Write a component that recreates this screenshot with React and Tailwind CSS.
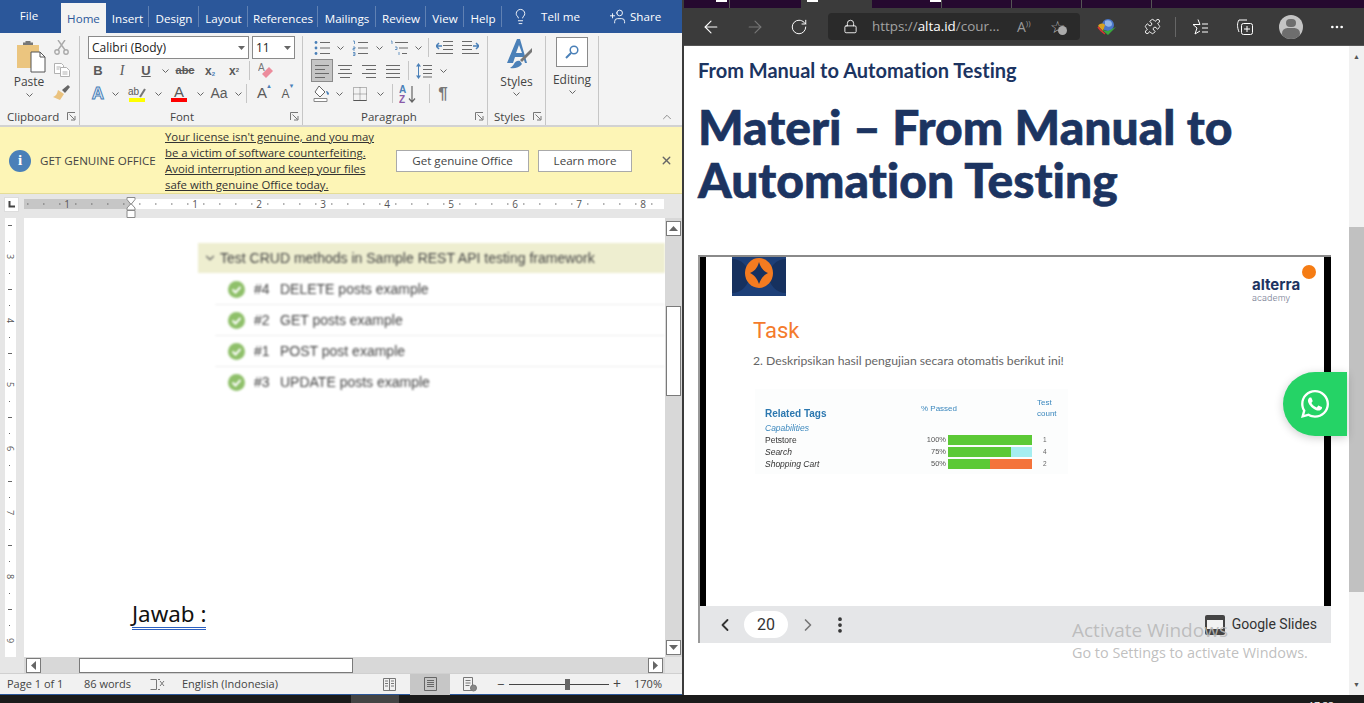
import React from "react";
import { ArrowLeft, ArrowRight, RotateCw, Lock, Puzzle, ChevronLeft, ChevronRight, EllipsisVertical, Ellipsis, Lightbulb, UserPlus, X, ChevronDown, ChevronUp } from "lucide-react";
import { FaWhatsapp } from "react-icons/fa";

const tabs = [
  ["Insert", "w-[43px]"],
  ["Design", "w-[50px]"],
  ["Layout", "w-[49px]"],
  ["References", "w-[70px]"],
  ["Mailings", "w-[58px]"],
  ["Review", "w-[50px]"],
  ["View", "w-[38px]"],
  ["Help", "w-[38px]"],
];

const G = "#6a6a6a";
const B = "#4a80b8";

function Chev({ w = "w-[12px]" }) {
  return (
    <span className={`${w} flex justify-center`}>
      <svg width="7" height="4" viewBox="0 0 7 4"><path d="M.5.5 3.5 3.5 6.5.5" fill="none" stroke="#666" /></svg>
    </span>
  );
}

function Launcher() {
  return (
    <svg width="9" height="9" viewBox="0 0 9 9"><path d="M.5 8V.5H8M2.5 2.5 7.5 7.5M4 8h4V4" fill="none" stroke="#777" /></svg>
  );
}

function Cell({ w, children }) {
  return <span className={`${w} h-full flex items-center justify-center shrink-0`}>{children}</span>;
}

function Div() {
  return <span className="block w-px h-[19px] bg-[#c6c6c6] shrink-0" />;
}

function Lines({ w = 16, ys = [2, 6, 10, 14], xs = [], color = G }) {
  return (
    <svg width={w} height="16" viewBox={`0 0 ${w} 16`}>
      {ys.map((y, i) => (
        <path key={i} d={`M${(xs[i] && xs[i][0]) || 0} ${y + 0.5}H${(xs[i] && xs[i][1]) || w}`} stroke={color} />
      ))}
    </svg>
  );
}

function Bullets() {
  return (
    <svg width="16" height="16" viewBox="0 0 16 16">
      <circle cx="2" cy="2.5" r="1.4" fill={B} /><circle cx="2" cy="8" r="1.4" fill={B} /><circle cx="2" cy="13.5" r="1.4" fill={B} />
      <path d="M6 2.5h10M6 8h10M6 13.5h10" stroke={G} />
    </svg>
  );
}

function Numbers() {
  return (
    <svg width="16" height="16" viewBox="0 0 16 16">
      <path d="M1 1h1.5v3M1 7h2v1.5H1V10h2M1 12.5h2v3H1M1 14h2" fill="none" stroke={B} strokeWidth=".8" />
      <path d="M6 2.5h10M6 8h10M6 13.5h10" stroke={G} />
    </svg>
  );
}

function Multi() {
  return (
    <svg width="18" height="16" viewBox="0 0 18 16">
      <path d="M1 1h1v3M5 7h2v2.500H5M9 12v3" fill="none" stroke={B} strokeWidth=".8" />
      <path d="M5 2.500h13M9 8h9M12 13.500h5" stroke={G} />
    </svg>
  );
}

function Indent({ flip }) {
  return (
    <svg width="17" height="13" viewBox="0 0 17 13" className={flip ? "-scale-x-100" : ""}>
      <path d="M7 .5h10M7 4.500h10M7 8.500h10M0 12.500h17" stroke={G} />
      <path d="M0 5h6M3 2 0 5l3 3" fill="none" stroke={B} strokeWidth="1.500" />
    </svg>
  );
}

function Paste() {
  return (
    <svg width="30" height="32" viewBox="0 0 30 32">
      <path d="M1 4h22v23H1z" fill="#ebc57f" />
      <path d="M7 4h10V1.500H14.500V0h-5v1.500H7z" fill="#777" />
      <path d="M15 11h9l5 5v15H15z" fill="#fff" stroke="#555" />
      <path d="M24 11v5h5" fill="none" stroke="#555" />
    </svg>
  );
}

function Scissors() {
  return (
    <svg width="15" height="15" viewBox="0 0 15 15" fill="none" stroke="#a9a9a9" strokeWidth="1.400">
      <circle cx="3" cy="12" r="2.200" /><circle cx="12" cy="12" r="2.200" />
      <path d="M4 10 11 0M11 10 4 0" />
    </svg>
  );
}

function Copy() {
  return (
    <svg width="16" height="14" viewBox="0 0 16 14" fill="#fff" stroke="#b1b1b1">
      <path d="M.5.5h7l2 2v8H.5z" /><path d="M6.500 4.500h6l3 3v6h-9z" />
      <path d="M2.500 4h4M2.500 6h3M8.500 9h5M8.500 11h5" />
    </svg>
  );
}

function Painter() {
  return (
    <svg width="17" height="16" viewBox="0 0 17 16">
      <path d="M9 5 15 0 17 2 12 8z" fill="#666" />
      <path d="M5 5 11 9 7 15 0 12C3 11 4 9 5 5z" fill="#eac27e" />
    </svg>
  );
}

function Eraser() {
  return (
    <svg width="16" height="17" viewBox="0 0 16 17">
      <path d="M8 16 15 9 11 5 4 12z" fill="#ec8c9c" />
      <text x="0" y="9" fontSize="10" fill="#777" fontFamily="Liberation Sans">A</text>
    </svg>
  );
}

function Shading() {
  return (
    <svg width="18" height="18" viewBox="0 0 18 18" fill="none">
      <path d="M6 1 12 7 7 12 2 7z" fill="#fff" stroke="#666" />
      <path d="M13 6c2 0 3 2 3 3s-2 1-2 0z" fill={B} />
      <path d="M1 13.500h13v3H1z" stroke="#888" fill="#fff" />
    </svg>
  );
}

function BordersIcon() {
  return (
    <svg width="14" height="14" viewBox="0 0 14 14">
      <path d="M.5.500h13v13H.5zM7 .5v13M.5 7h13" fill="none" stroke="#777" strokeDasharray="1 1" />
      <path d="M.5 13.500h13" stroke="#555" />
    </svg>
  );
}

function Sort() {
  return (
    <svg width="18" height="20" viewBox="0 0 18 20">
      <text x="0" y="9" fontSize="10" fontWeight="700" fill={B} fontFamily="Liberation Sans">A</text>
      <text x="0" y="19" fontSize="10" fontWeight="700" fill="#8a5aa8" fontFamily="Liberation Sans">Z</text>
      <path d="M13 2v16M10 14.500l3 3.500 3-3.500" fill="none" stroke="#666" strokeWidth="1.200" />
    </svg>
  );
}

function LineSpacing() {
  return (
    <svg width="16" height="18" viewBox="0 0 16 18">
      <path d="M2.500 2v14" stroke={B} />
      <path d="M0 4.500 2.500 1 5 4.500zM0 13.500 2.500 17 5 13.500z" fill={B} />
      <path d="M7 3.500h9M7 7.500h9M7 11.500h9M7 15h9" stroke={G} />
    </svg>
  );
}

function StylesIcon() {
  return (
    <svg width="30" height="32" viewBox="0 0 30 32">
      <path d="M14 1 4 25h6l2-6h8l2 6h2L17 1zM13 15l3-8 3 8z" fill={B} />
      <path d="M29 10 17 22l2 2L29 14z" fill="#777" />
      <path d="M17 23c-3-1-5 1-6 3s-3 3-4 4c4 1 9 0 12-4z" fill={B} />
    </svg>
  );
}

function Ruler() {
  const ticks = [];
  for (let x = 3; x < 640; x += 16) {
    const major = (x - 107) % 64 === 0;
    if ((x - 107) % 32 === 0 && !major) ticks.push(<path key={x} d={`M${x + 0.5} 4v6`} stroke="#666" />);
    else if (!major) ticks.push(<path key={x} d={`M${x} 7h1.500`} stroke="#666" />);
  }
  const nums = [[43, 1], [171, 1], [235, 2], [299, 3], [363, 4], [427, 5], [491, 6], [555, 7], [619, 8]];
  return (
    <svg width="640" height="21" viewBox="0 0 640 21" className="block">
      <path d="M0 2h107v10H0z" fill="#c6c6c6" />
      <path d="M107 2h533v10H107z" fill="#fff" />
      {ticks}
      {nums.map(([x, n], i) => (
        <text key={i} x={x} y="11" textAnchor="middle" fontSize="10" fill="#555" fontFamily="Open Sans">{n}</text>
      ))}
      <path d="M103 .5h8v2l-4 5-4-5zM103 13v-2l4-4.500 4 4.500v2zM103 13.500h8v7h-8z" fill="#fff" stroke="#8a8a8a" />
    </svg>
  );
}

function VRuler() {
  const ticks = [];
  for (let y = 7; y < 439; y += 16) {
    const major = (y - 39) % 64 === 0;
    if ((y - 7) % 32 === 0 && !major) ticks.push(<path key={y} d={`M3 ${y + 0.5}h4`} stroke="#666" />);
    else if (!major) ticks.push(<path key={y} d={`M4.500 ${y}v1`} stroke="#666" />);
  }
  const nums = [[39, 3], [103, 4], [167, 5], [231, 6], [295, 7], [359, 8], [423, 9]];
  return (
    <svg width="11" height="439" viewBox="0 0 11 439" className="block">
      {ticks}
      {nums.map(([y, n], i) => (
        <text key={i} x="0" y="0" transform={`translate(2 ${y - 3}) rotate(90)`} fontSize="9" fill="#555" fontFamily="Open Sans">{n}</text>
      ))}
    </svg>
  );
}

function ScrollBtn({ d, className = "" }) {
  return (
    <span className={`w-[15px] h-[15px] bg-white border border-[#7a7a7a] flex items-center justify-center shrink-0 ${className}`}>
      <svg width="9" height="9" viewBox="0 0 9 9"><path d={d} fill="#666" /></svg>
    </span>
  );
}

function CheckDot() {
  return (
    <svg width="17" height="17" viewBox="0 0 17 17">
      <circle cx="8.500" cy="8.500" r="8.500" fill="#8fc06a" />
      <path d="M4.500 8.500 7.500 11.500 12.500 6" fill="none" stroke="#fff" strokeWidth="2" />
    </svg>
  );
}

function Ribbon() {
  return (
    <div className="h-[92px] bg-[#f3f3f3] flex text-[#444] shrink-0">
      {/* clipboard */}
      <div className="w-[80px] border-r border-[#c6c6c6] flex flex-col shrink-0 mt-[3px]">
        <div className="flex h-[69px]">
          <div className="w-[50px] flex flex-col items-center pt-[5px]">
            <span className="ml-[12px]"><Paste /></span>
            <span className="mt-[1px] text-[12px] leading-[16px] ml-[8px]">Paste</span>
            <span className="mt-[3px] ml-[8px]"><Chev /></span>
          </div>
          <div className="flex flex-col items-center gap-[8px] pt-[4px] ml-[3px]">
            <Scissors /><Copy /><Painter />
          </div>
        </div>
        <div className="mt-auto h-[17px] flex items-center justify-between pl-[7px] pr-[3px] text-[11.5px]">
          <span>Clipboard</span><Launcher />
        </div>
      </div>
      {/* font */}
      <div className="w-[223px] border-r border-[#c6c6c6] flex flex-col shrink-0 mt-[3px]">
        <div className="flex h-[23px] pl-[8px] gap-[3px]">
          <div className="w-[161px] bg-white border border-[#8a8a8a] flex items-center justify-between px-[3px] text-[12px] text-[#222]">
            <span>Calibri (Body)</span>
            <svg width="7" height="4" viewBox="0 0 7 4"><path d="M0 0h7L3.500 4z" fill="#666" /></svg>
          </div>
          <div className="w-[43px] bg-white border border-[#8a8a8a] flex items-center justify-between px-[3px] text-[12px] text-[#222]">
            <span>11</span>
            <svg width="7" height="4" viewBox="0 0 7 4"><path d="M0 0h7L3.500 4z" fill="#666" /></svg>
          </div>
        </div>
        <div className="flex h-[23px] pl-[6px] items-center font-['Liberation_Sans',sans-serif] text-[#5a5a5a]">
          <Cell w="w-[24px]"><b className="text-[13px]">B</b></Cell>
          <Cell w="w-[24px]"><i className="text-[14px] font-['Liberation_Serif',serif]">I</i></Cell>
          <Cell w="w-[24px]"><u className="text-[13px] font-bold">U</u></Cell>
          <Chev w="w-[14px]" />
          <Cell w="w-[26px]"><s className="text-[11px] font-bold">abc</s></Cell>
          <Cell w="w-[24px]"><b className="text-[12px]">x<sub className="text-[6px] text-[#4a80b8]">2</sub></b></Cell>
          <Cell w="w-[24px]"><b className="text-[12px]">x<sup className="text-[6px]">2</sup></b></Cell>
          <span className="ml-[3px]"><Div /></span>
          <Cell w="w-[31px]"><Eraser /></Cell>
        </div>
        <div className="flex h-[23px] pl-[6px] items-center font-['Liberation_Sans',sans-serif] text-[#5a5a5a]">
          <Cell w="w-[24px]"><span className="text-[17px] font-bold text-[#e8f0f8] [-webkit-text-stroke:1px_#4a80b8]">A</span></Cell>
          <Chev w="w-[10px]" />
          <Cell w="w-[34px]">
            <span className="flex flex-col items-center w-[16px]">
              <span className="flex items-end text-[10px] leading-[12px]">ab
                <svg width="7" height="10" viewBox="0 0 7 10"><path d="M1 9 6 1" stroke="#777" strokeWidth="2" /></svg>
              </span>
              <span className="w-[16px] h-[4px] bg-[#ffff00]" />
            </span>
          </Cell>
          <Chev w="w-[8px]" />
          <Cell w="w-[34px]">
            <span className="flex flex-col items-center w-[16px]">
              <span className="text-[15px] leading-[13px]">A</span>
              <span className="w-[16px] h-[4px] bg-[#ff0000]" />
            </span>
          </Cell>
          <Chev w="w-[8px]" />
          <Cell w="w-[30px]"><span className="text-[14px]">Aa</span></Cell>
          <Chev w="w-[8px]" />
          <span className="ml-[4px]"><Div /></span>
          <Cell w="w-[30px]"><span className="text-[15px] relative">A<span className="absolute -right-[5px] top-0 text-[6px] text-[#4a80b8]">▲</span></span></Cell>
          <Cell w="w-[17px]"><span className="text-[12px] relative">A<span className="absolute -right-[5px] -top-[3px] text-[6px] text-[#4a80b8]">▼</span></span></Cell>
        </div>
        <div className="mt-auto h-[17px] flex items-center pr-[3px] text-[11.5px]">
          <span className="ml-[90px]">Font</span><span className="ml-auto"><Launcher /></span>
        </div>
      </div>
      {/* paragraph */}
      <div className="w-[185px] border-r border-[#c6c6c6] flex flex-col shrink-0 mt-[3px]">
        <div className="flex h-[23px] items-center pl-[8px]">
          <Cell w="w-[22px]"><Bullets /></Cell><Chev w="w-[14px]" />
          <Cell w="w-[26px]"><Numbers /></Cell><Chev w="w-[12px]" />
          <Cell w="w-[28px]"><Multi /></Cell><Chev w="w-[10px]" />
          <span className="ml-[5px]"><Div /></span>
          <Cell w="w-[30px]"><Indent /></Cell>
          <Cell w="w-[22px]"><Indent flip /></Cell>
        </div>
        <div className="flex h-[23px] items-center pl-[8px]">
          <span className="w-[22px] h-[23px] bg-[#c6c6c6] border border-[#8a8a8a] flex items-center justify-center shrink-0">
            <Lines w={14} xs={[[0, 14], [0, 10], [0, 14], [0, 10]]} />
          </span>
          <Cell w="w-[24px]"><Lines w={14} xs={[[0, 14], [2, 12], [0, 14], [2, 12]]} /></Cell>
          <Cell w="w-[24px]"><Lines w={14} xs={[[0, 14], [4, 14], [0, 14], [4, 14]]} /></Cell>
          <Cell w="w-[24px]"><Lines w={14} /></Cell>
          <span className="ml-[3px]"><Div /></span>
          <Cell w="w-[30px]"><LineSpacing /></Cell><Chev w="w-[8px]" />
        </div>
        <div className="flex h-[23px] items-center pl-[8px]">
          <Cell w="w-[22px]"><Shading /></Cell><Chev w="w-[12px]" />
          <Cell w="w-[30px]"><BordersIcon /></Cell><Chev w="w-[10px]" />
          <span className="ml-[7px]"><Div /></span>
          <Cell w="w-[30px]"><Sort /></Cell>
          <span className="ml-[6px]"><Div /></span>
          <Cell w="w-[26px]"><span className="text-[17px] font-bold text-[#777] font-['Liberation_Sans',sans-serif]">¶</span></Cell>
        </div>
        <div className="mt-auto h-[17px] flex items-center pr-[3px] text-[11.5px]">
          <span className="ml-[58px]">Paragraph</span><span className="ml-auto"><Launcher /></span>
        </div>
      </div>
      {/* styles */}
      <div className="w-[58px] border-r border-[#c6c6c6] flex flex-col items-center shrink-0 mt-[3px]">
        <span className="mt-[2px] ml-[2px]"><StylesIcon /></span>
        <span className="mt-[4px] text-[12px] leading-[16px]">Styles</span>
        <span className="mt-[2px]"><Chev /></span>
        <div className="mt-auto h-[17px] w-full flex items-center justify-between pl-[6px] pr-[3px] text-[11.5px]">
          <span>Styles</span><Launcher />
        </div>
      </div>
      {/* editing */}
      <div className="w-[53px] border-r border-[#c6c6c6] flex flex-col items-center shrink-0 mt-[3px]">
        <span className="mt-[1px] w-[32px] h-[30px] bg-white border border-[#8a8a8a] flex items-center justify-center">
          <svg width="14" height="14" viewBox="0 0 14 14" fill="none" stroke="#4a80b8" strokeWidth="1.500"><circle cx="9" cy="5" r="3.800" /><path d="M6 8 1 13" strokeWidth="2" /></svg>
        </span>
        <span className="mt-[5px] text-[12px] leading-[16px]">Editing</span>
        <span className="mt-[2px]"><Chev /></span>
      </div>
      <div className="flex-1 flex items-end justify-end pr-[8px] pb-[1px]">
        <ChevronUp size={14} color="#666" strokeWidth={1.200} />
      </div>
    </div>
  );
}

function WordWindow() {
  return (
    <div className="w-[682px] h-full flex flex-col bg-[#e6e6e6] font-['Open_Sans',sans-serif] shrink-0 overflow-hidden">
      {/* tab row */}
      <div className="h-[33px] bg-[#2b579a] flex items-end text-white text-[11.6px] shrink-0">
        <span className="w-[61px] h-[33px] flex items-center justify-center pb-[2px] pr-[3px]">File</span>
        <span className="w-[45px] h-[30px] bg-[#f3f3f3] text-[#2b579a] flex items-center justify-center pt-[1px]">Home</span>
        {tabs.map(([t, w]) => (
          <span key={t} className={`${w} h-[33px] flex items-center justify-center shrink-0 relative pt-[4px]`}>
            {t}
            <span className="absolute right-0 top-[6px] h-[21px] w-px bg-white/25" />
          </span>
        ))}
        <span className="h-[33px] flex items-center ml-[10px]">
          <Lightbulb size={17} strokeWidth={1.300} />
          <span className="ml-[12px]">Tell me</span>
          <UserPlus size={17} strokeWidth={1.300} className="ml-[29px] -scale-x-100" />
          <span className="ml-[4px]">Share</span>
        </span>
      </div>
      <Ribbon />
      {/* license bar */}
      <div className="h-[69px] border-t-2 border-t-[#d2d2d2] border-b border-b-[#e5dd97] bg-[#fdf5b6] flex items-center text-[#444] shrink-0 pt-[1px]">
        <span className="ml-[9px] w-[22px] h-[22px] rounded-full bg-[#4a80b8] text-white flex items-center justify-center font-bold text-[15px] font-['Liberation_Serif',serif] shrink-0">i</span>
        <span className="ml-[9px] text-[11.6px] w-[125px] shrink-0 whitespace-nowrap">GET GENUINE OFFICE</span>
        <div className="w-[231px] text-[11.4px] leading-[16px] underline text-[#333] shrink-0">
          <div className="whitespace-nowrap">Your license isn't genuine, and you may</div>
          <div className="whitespace-nowrap">be a victim of software counterfeiting.</div>
          <div className="whitespace-nowrap">Avoid interruption and keep your files</div>
          <div className="whitespace-nowrap">safe with genuine Office today.</div>
        </div>
        <span className="w-[133px] h-[22px] bg-white border border-[#aaa] flex items-center justify-center text-[11.6px] shrink-0">Get genuine Office</span>
        <span className="ml-[9px] w-[94px] h-[22px] bg-white border border-[#aaa] flex items-center justify-center text-[11.6px] shrink-0">Learn more</span>
        <X size={13} strokeWidth={2.500} color="#666" className="ml-[28px]" />
      </div>
      {/* ruler */}
      <div className="h-[24px] flex shrink-0">
        <span className="w-[24px] flex items-start pl-[4px] pt-[3px]">
          <span className="w-[15px] h-[15px] bg-white border border-[#ddd] flex items-center justify-center">
            <svg width="7" height="7" viewBox="0 0 7 7"><path d="M1.500 0v5.500H7" fill="none" stroke="#444" strokeWidth="2" /></svg>
          </span>
        </span>
        <span className="pt-[3px]"><Ruler /></span>
      </div>
      {/* document */}
      <div className="flex-1 flex min-h-0">
        <div className="w-[24px] pl-[5px] shrink-0">
          <div className="w-[11px] h-full bg-white"><VRuler /></div>
        </div>
        <div className="flex-1 bg-white pl-[174px] pt-[25px] flex flex-col overflow-hidden">
          <div className="blur-[1px] font-['Liberation_Sans',sans-serif] text-[14px] text-[#444]">
            <div className="h-[30px] bg-[#eeeed0] flex items-center">
              <ChevronDown size={14} color="#666" className="ml-[5px]" />
              <span className="ml-[3px] whitespace-nowrap">Test CRUD methods in Sample REST API testing framework</span>
            </div>
            {[["#4", "DELETE posts example"], ["#2", "GET posts example"], ["#1", "POST post example"], ["#3", "UPDATE posts example"]].map(([n, t], i) => (
              <div key={n} className={`ml-[17px] flex items-center ${i === 0 ? "h-[32px] pt-[1px]" : "h-[31px]"} ${i < 3 ? "border-b border-[#eee]" : ""}`}>
                <span className="ml-[13px]"><CheckDot /></span>
                <span className="ml-[9px] w-[26px]">{n}</span>
                <span>{t}</span>
              </div>
            ))}
          </div>
          <div className="-ml-[66px] mt-[203px] w-fit text-[22.4px] leading-[26px] text-[#111] font-['Noto_Sans',sans-serif] border-b-[3px] border-double border-[#2b5fc0]">Jawab :</div>
        </div>
        <div className="w-[17px] bg-[#d8d8d8] flex flex-col items-center shrink-0 pt-[3px] pb-[2px]">
          <ScrollBtn d="M0 7 4.500 2 9 7z" />
          <span className="mt-[70px] w-[15px] h-[90px] bg-white border border-[#7a7a7a]" />
          <ScrollBtn d="M0 2 4.500 7 9 2z" className="mt-auto" />
        </div>
      </div>
      {/* bottom scrollbar */}
      <div className="h-[16px] flex shrink-0 pl-[24px] pr-[17px]">
        <div className="flex-1 bg-[#d8d8d8] flex items-center pl-[2px] pr-[2px] h-[16px]">
          <ScrollBtn d="M7 0 2 4.500 7 9z" />
          <span className="ml-[38px] w-[274px] h-[15px] bg-white border border-[#7a7a7a]" />
          <ScrollBtn d="M2 0 7 4.500 2 9z" className="ml-auto" />
        </div>
      </div>
      {/* status */}
      <div className="h-[22px] bg-[#f1f1f1] border-t border-[#d0d0d0] border-b border-b-[#2b579a] flex items-center text-[11px] text-[#444] shrink-0">
        <span className="ml-[7px] w-[77px] shrink-0">Page 1 of 1</span>
        <span className="w-[66px] shrink-0">86 words</span>
        <svg width="15" height="13" viewBox="0 0 15 13" fill="none" stroke="#777"><path d="M.5 1.500h6v10h-6M8 1.500h2M8 11.500h2" /><path d="M10 3l4 5M14 3l-4 5" /></svg>
        <span className="ml-[17px] w-[201px] shrink-0 whitespace-nowrap">English (Indonesia)</span>
        <svg width="13" height="15" viewBox="0 0 13 15" fill="none" stroke="#777"><path d="M.5 1.500h12v12H.5zM6.500 1.500v12M2 4h3M2 6.500h3M2 9h3M8 4h3M8 6.500h3M8 9h3" /></svg>
        <span className="ml-[14px] w-[40px] h-[21px] bg-[#c6c6c6] flex items-center justify-center shrink-0">
          <svg width="13" height="14" viewBox="0 0 13 14" fill="none" stroke="#666"><path d="M.5.500h12v13H.5zM3 3.500h7M3 5.500h7M3 7.500h7M3 9.500h7" /></svg>
        </span>
        <svg width="14" height="15" viewBox="0 0 14 15" fill="none" stroke="#777" className="ml-[13px]"><path d="M.5.500h9v13H.5zM2.500 3.500h5M2.500 6h5M2.500 8.500h4" /><circle cx="10.500" cy="11" r="3" fill="#888" /></svg>
        <span className="ml-[20px] text-[13px] leading-none w-[8px]">−</span>
        <span className="ml-[4px] w-[100px] h-px bg-[#444] relative shrink-0">
          <span className="absolute left-[56px] -top-[5px] w-[5px] h-[11px] bg-[#666]" />
        </span>
        <span className="ml-[4px] text-[14px] leading-none">+</span>
        <span className="ml-[13px] whitespace-nowrap">170%</span>
      </div>
    </div>
  );
}

function IdmIcon() {
  return (
    <svg width="20" height="18" viewBox="0 0 20 18">
      <circle cx="11" cy="7" r="6" fill="#4a76c9" />
      <path d="M8 3c3-2 7 0 7 3s-4 4-7 1z" fill="#8fb4e8" />
      <path d="M1 8C3 5 6 5 8 7L6 13z" fill="#d9a21f" />
      <path d="M5 12l6 5 8-8-8 4z" fill="#39a83f" />
      <path d="M1 9c2 3 4 5 7 7" stroke="#d33" strokeWidth="1.500" fill="none" />
    </svg>
  );
}

function Slide() {
  return (
    <div className="flex-1 bg-white flex flex-col relative min-w-0">
      <div className="flex justify-between items-start pl-[26px] pr-[8px]">
        <svg width="54" height="39" viewBox="0 0 54 39">
          <rect width="54" height="39" fill="#1d3f78" />
          <circle cx="0" cy="19" r="17" fill="#16315f" /><circle cx="54" cy="19" r="17" fill="#16315f" />
          <ellipse cx="27" cy="16" rx="14" ry="15" fill="#f47b20" />
          <path d="M27 5C29 12 32 14 36 16 32 18 29 21 27 27 25 21 22 18 18 16 22 14 25 12 27 5z" fill="#16315f" />
        </svg>
        <div className="relative mt-[19px] w-[64px] font-['Inter',sans-serif] leading-none">
          <div className="text-[15px] font-bold text-[#1d3461] mt-[1px]">alterra</div>
          <div className="text-[9px] text-[#7a8296] font-light mt-[1px]">academy</div>
          <span className="absolute right-[0px] -top-[11px] w-[14px] h-[14px] rounded-full bg-[#f57c14]" />
        </div>
      </div>
      <div className="ml-[47px] mt-[14px] text-[22px] leading-[30px] text-[#f47b2c] font-['Roboto',sans-serif]">Task</div>
      <div className="ml-[47px] mt-[7px] text-[12.2px] leading-[16px] text-[#666] font-['Lato',sans-serif] whitespace-nowrap">2. Deskripsikan hasil pengujian secara otomatis berikut ini!</div>
      <div className="ml-[49px] mt-[20px] w-[313px] h-[85px] bg-[#fcfdfd] blur-[0.6px] font-['Liberation_Sans',sans-serif] text-[7.5px] text-[#333] px-[10px] pt-[8px]">
        <div className="grid grid-cols-[158px_25px_84px_1fr] items-center leading-[11px]">
          <b className="text-[10px] text-[#2c78b0] self-end">Related Tags</b>
          <span className="col-span-2 text-[#3a87bd] text-[8px] self-center -ml-[2px]">% Passed</span>
          <span className="text-[#3a87bd] text-[8px] ml-[5px]">Test<br />count</span>
        </div>
        <div className="grid grid-cols-[158px_25px_84px_1fr] items-center leading-[12px]">
          <i className="text-[#3a87bd] text-[8.5px] col-span-4 mt-[3px]">Capabilities</i>
          <span className="text-[8.5px]">Petstore</span>
          <span className="text-right pr-[2px] text-[#555]">100%</span>
          <span className="h-[10px] bg-[#5cc936]" />
          <span className="pl-[11px] text-[#666] text-[6.5px]">1</span>
          <i className="text-[8.5px]">Search</i>
          <span className="text-right pr-[2px] text-[#555]">75%</span>
          <span className="h-[10px] bg-[#a5eef0] flex"><span className="w-[63px] bg-[#5cc936]" /></span>
          <span className="pl-[11px] text-[#666] text-[6.5px]">4</span>
          <i className="text-[8.5px] whitespace-nowrap">Shopping Cart</i>
          <span className="text-right pr-[2px] text-[#555]">50%</span>
          <span className="h-[10px] bg-[#f4733a] flex"><span className="w-[42px] bg-[#5cc936]" /></span>
          <span className="pl-[11px] text-[#666] text-[6.5px]">2</span>
        </div>
      </div>
    </div>
  );
}

function BrowserWindow() {
  return (
    <div className="flex-1 h-full flex flex-col relative font-['Open_Sans',sans-serif] bg-white overflow-hidden">
      {/* tab strip */}
      <div className="h-[8px] bg-[#25092f] flex shrink-0 overflow-hidden">
        <span className="w-[46px] h-full border-r border-[#555] flex justify-end"><span className="w-[11px] h-[2px] bg-white mr-[2px]" /></span>
        <span className="w-[71px] h-full bg-[#3b3b3b] ml-[71px] flex"><span className="w-[11px] h-[2px] bg-white ml-[6px]" /></span>
        <span className="w-[70px] h-full border-r border-[#555] flex justify-end"><span className="w-[11px] h-[2px] bg-white mr-[0px]" /></span>
        <span className="w-[70px] h-full border-r border-[#555]" />
        <span className="w-[70px] h-full border-r border-[#555]" />
        <span className="w-[70px] h-full border-r border-[#555]" />
      </div>
      {/* toolbar */}
      <div className="h-[38px] bg-[#3b3b3b] flex items-center text-white shrink-0 border-b border-[#555]">
        <ArrowLeft size={20} strokeWidth={1.300} className="ml-[17px] shrink-0" />
        <ArrowRight size={20} strokeWidth={1.300} className="ml-[24px] shrink-0 text-[#777]" />
        <RotateCw size={18} strokeWidth={1.300} className="ml-[25px] shrink-0" />
        <div className="ml-[20px] w-[252px] h-[27px] rounded-[4px] bg-[#2a2a2a] flex items-center shrink-0">
          <Lock size={15} strokeWidth={1.400} className="ml-[15px] shrink-0" />
          <span className="ml-[14px] text-[13.4px] text-[#a3a3a3] w-[134px] whitespace-nowrap shrink-0">https://<span className="text-white">alta.id</span>/cour...</span>
          <span className="ml-[11px] text-[14px] text-[#999]">A</span>
          <span className="text-[8px] text-[#999] -mt-[8px]">))</span>
          <span className="ml-[19px] text-[17px] leading-none text-[#bbb] relative">☆<span className="absolute -right-[2px] bottom-0 w-[9px] h-[9px] rounded-full bg-[#aaa]" /></span>
        </div>
        <span className="ml-[17px] shrink-0"><IdmIcon /></span>
        <Puzzle size={17} strokeWidth={1.300} className="ml-[27px] shrink-0" />
        <span className="ml-[14px] w-px h-[20px] bg-[#666] shrink-0" />
        <svg width="18" height="18" viewBox="0 0 18 18" fill="none" stroke="#fff" className="ml-[15px] shrink-0"><path d="M7 1.500 9 6.500h-7l4 3.500-2 6 5-3M11 6h6M11 10h6M11 14h6" /></svg>
        <svg width="18" height="18" viewBox="0 0 18 18" fill="none" stroke="#fff" className="ml-[27px] shrink-0"><path d="M3 14c-2-5-2-9 0-12h8" /><rect x="5.500" y="5.500" width="11" height="11" rx="2" /><path d="M11 8v6M8 11h6" /></svg>
        <span className="ml-[25px] w-[24px] h-[24px] rounded-full bg-[#c4c4c4] flex flex-col items-center overflow-hidden shrink-0">
          <span className="mt-[4px] w-[10px] h-[10px] rounded-full bg-[#6e6e6e]" />
          <span className="mt-[1px] w-[18px] h-[12px] rounded-full bg-[#6e6e6e]" />
        </span>
        <Ellipsis size={16} strokeWidth={2} className="ml-[26px] shrink-0" />
      </div>
      {/* page */}
      <div className="flex-1 flex min-h-0">
        <div className="flex-1 pl-[14px] min-w-0">
          <h2 className="mt-[11px] text-[20px] leading-[26px] font-bold text-[#1c3461] font-['Lato',sans-serif] [font-variant-ligatures:none]">From Manual to Automation Testing</h2>
          <h1 className="mt-[17px] text-[48px] leading-[53px] font-black text-[#1c3461] font-['Lato',sans-serif] [font-variant-ligatures:none] [-webkit-text-stroke:0.6px_#1c3461] w-[620px]">Materi – From Manual to Automation Testing</h1>
          <div className="mt-[49px] w-[633px] border-t-2 border-l-2 border-[#8a8a8a] border-l-[#999]">
            <div className="h-[349px] flex">
              <span className="w-[6px] bg-black shrink-0" />
              <Slide />
              <span className="w-[7px] bg-black shrink-0" />
            </div>
            <div className="h-[37px] bg-[#e5e6e8] flex items-center text-[#333]">
              <ChevronLeft size={20} strokeWidth={2.200} className="ml-[15px]" />
              <span className="ml-[9px] w-[44px] h-[27px] rounded-full bg-white flex items-center justify-center text-[16px] font-['Roboto',sans-serif]">20</span>
              <ChevronRight size={20} strokeWidth={2} className="ml-[10px] text-[#777]" />
              <EllipsisVertical size={20} strokeWidth={2.500} className="ml-[12px]" />
              <svg width="20" height="20" viewBox="0 0 20 20" className="ml-auto"><rect width="20" height="20" rx="2" fill="#444" /><rect x="2" y="5" width="16" height="9" fill="#f2f2f2" /></svg>
              <span className="ml-[7px] mr-[14px] text-[14px] text-[#333] font-['Roboto',sans-serif] whitespace-nowrap">Google Slides</span>
            </div>
          </div>
        </div>
        <div className="w-[15px] bg-[#f1f1f1] flex flex-col items-center shrink-0">
          <span className="mt-[7px] text-[7px] leading-[8px] text-[#555]">▲</span>
          <span className="mt-[166px] w-[15px] h-[365px] bg-[#c1c1c1] shrink-0" />
          <span className="mt-auto mb-[6px] text-[7px] leading-[8px] text-[#555]">▼</span>
        </div>
      </div>
      {/* overlays */}
      <div className="absolute left-[599px] top-[372px] w-[64px] h-[64px] rounded-l-full bg-[#25d366] shadow-[0_2px_10px_rgba(0,0,0,0.2)] flex items-center justify-center text-white">
        <FaWhatsapp size={32} />
      </div>
      <div className="absolute left-[388px] top-[617px] pointer-events-none text-[#b8b8b8]/90 font-['Open_Sans',sans-serif] whitespace-nowrap">
        <div className="text-[19px] leading-[26px]">Activate Windows</div>
        <div className="text-[14.4px] leading-[20px]">Go to Settings to activate Windows.</div>
      </div>
    </div>
  );
}

export default function App() {
  return (
    <div className="w-[1364px] h-[703px] flex flex-col overflow-hidden bg-[#1a1a1a]">
      <div className="h-[695px] flex shrink-0">
        <WordWindow />
        <span className="w-[2px] bg-[#3b3b3b] shrink-0" />
        <BrowserWindow />
      </div>
      <div className="flex-1 flex bg-[#1b1b1b] relative overflow-hidden">
        <span className="ml-[351px] w-[48px] bg-[#444]" />
        <span className="ml-auto mr-[30px] mt-[5px] text-[10px] leading-[12px] text-white font-['Open_Sans',sans-serif]">17:33</span>
      </div>
    </div>
  );
}
